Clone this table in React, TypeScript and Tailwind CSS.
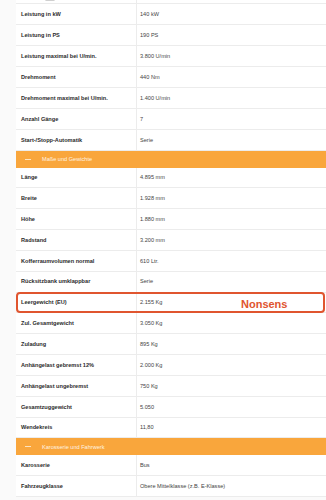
import * as React from 'react';

type Row = { label: string; value: string; flag?: string };

const motorRows: Row[] = [
  { label: 'Leistung in kW', value: '140 kW' },
  { label: 'Leistung in PS', value: '190 PS' },
  { label: 'Leistung maximal bei U/min.', value: '3.800 U/min' },
  { label: 'Drehmoment', value: '440 Nm' },
  { label: 'Drehmoment maximal bei U/min.', value: '1.400 U/min' },
  { label: 'Anzahl Gänge', value: '7' },
  { label: 'Start-/Stopp-Automatik', value: 'Serie' },
];

const massRows: Row[] = [
  { label: 'Länge', value: '4.895 mm' },
  { label: 'Breite', value: '1.928 mm' },
  { label: 'Höhe', value: '1.880 mm' },
  { label: 'Radstand', value: '3.200 mm' },
  { label: 'Kofferraumvolumen normal', value: '610 Ltr.' },
  { label: 'Rücksitzbank umklappbar', value: 'Serie' },
  { label: 'Leergewicht (EU)', value: '2.155 Kg', flag: 'Nonsens' },
  { label: 'Zul. Gesamtgewicht', value: '3.050 Kg' },
  { label: 'Zuladung', value: '895 Kg' },
  { label: 'Anhängelast gebremst 12%', value: '2.000 Kg' },
  { label: 'Anhängelast ungebremst', value: '750 Kg' },
  { label: 'Gesamtzuggewicht', value: '5.050' },
  { label: 'Wendekreis', value: '11,80' },
];

const bodyRows: Row[] = [
  { label: 'Karosserie', value: 'Bus' },
  { label: 'Fahrzeugklasse', value: 'Obere Mittelklasse (z.B. E-Klasse)' },
];

function SpecRow({ row, tall }: { row: Row; tall?: boolean }) {
  return (
    <div
      className={`relative grid grid-cols-[120px_1fr] border-b border-[#ececec] ${
        tall ? 'h-[21px]' : 'h-[20.85px]'
      }`}
    >
      <div className="flex items-center pl-[5px] font-bold text-[5.6px] text-[#2b2b2b]">{row.label}</div>
      <div className="flex items-center pl-[3px] border-l border-[#ececec] text-[5.6px] text-[#444]">
        {row.value}
      </div>
      {row.flag && (
        <div className="absolute left-0 right-px top-[-1px] bottom-[-1px] rounded-[4px] border-2 border-[#e0552f]">
          <span className="absolute left-[223px] top-[2px] font-bold text-[11px] text-[#e0552f]">
            {row.flag}
          </span>
        </div>
      )}
    </div>
  );
}

function Section({ title }: { title: string }) {
  return (
    <div className="flex items-center h-[16.5px] bg-[#f9a63c] text-white text-[5.6px]">
      <span className="ml-[9px] w-[6px] h-px bg-[#fde3bf]" />
      <span className="ml-[11px] text-[#fff3e2]">{title}</span>
    </div>
  );
}

export default function App() {
  return (
    <div
      className="w-[326px] h-[500px] overflow-hidden bg-[#fafafa] pl-4"
      style={{ fontFamily: '"Liberation Sans", Arial, sans-serif' }}
    >
      <div className="bg-white">
        <div className="h-[4px] overflow-hidden border-b border-[#ececec] grid grid-cols-[120px_1fr]">
          <div className="relative">
            <span className="absolute left-[29px] top-[-2px] w-[10px] h-[3px] bg-[#cfcfcf] rounded-sm" />
          </div>
          <div className="border-l border-[#ececec]" />
        </div>
        {motorRows.map((r) => (
          <SpecRow key={r.label} row={r} tall />
        ))}
        <Section title="Maße und Gewichte" />
        {massRows.map((r) => (
          <SpecRow key={r.label} row={r} />
        ))}
        <Section title="Karosserie und Fahrwerk" />
        {bodyRows.map((r) => (
          <SpecRow key={r.label} row={r} tall />
        ))}
      </div>
    </div>
  );
}
